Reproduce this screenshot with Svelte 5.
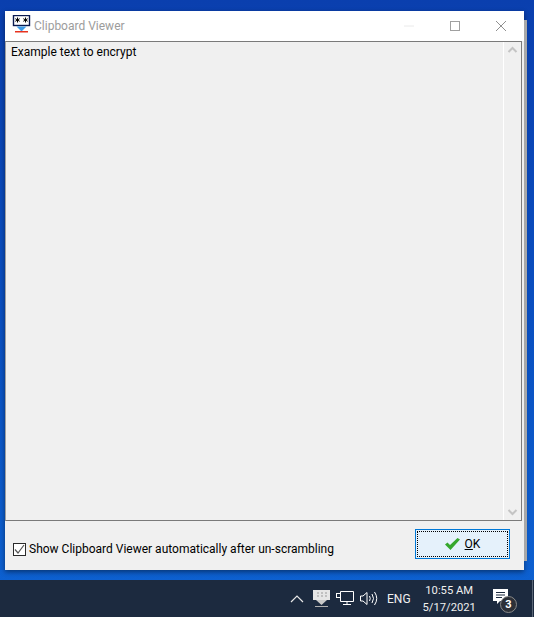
<script>
  let showAfter = true;
</script>

<div class="desktop">
  <div class="window">
    <div class="titlebar">
      <svg class="appicon" width="20" height="20" viewBox="0 0 20 20">
        <rect x="1.500" y="0.500" width="16" height="10" fill="#fff" stroke="#0a1a50" stroke-width="1.400"/>
        <path d="M5.500 2.500v5M3.300 3.700l4.400 2.600M7.700 3.700l-4.400 2.600M13.500 2.500v5M11.300 3.700l4.400 2.600M15.700 3.700l-4.400 2.600" stroke="#000" stroke-width="1"/>
        <path d="M4.500 11.500h10l-5 5z" fill="#3d9be8"/>
        <rect x="3" y="16" width="13" height="1.500" fill="#e8321e"/>
      </svg>
      <span class="title">Clipboard Viewer</span>
      <div class="controls">
        <svg class="ctl" width="46" height="30" viewBox="0 0 46 30"><path d="M18 15h10" stroke="#eaeaea"/></svg>
        <svg class="ctl" width="46" height="30" viewBox="0 0 46 30"><rect x="18.500" y="10.500" width="9" height="9" fill="none" stroke="#a0a0a0"/></svg>
        <svg class="ctl" width="46" height="30" viewBox="0 0 46 30"><path d="M18 10l10 10M28 10l-10 10" stroke="#909090"/></svg>
      </div>
    </div>

    <div class="textbox">
      <div class="text">Example text to encrypt</div>
      <div class="scrollbar">
        <svg width="17" height="17" viewBox="0 0 17 17"><path d="M4.500 10l4-4 4 4" fill="none" stroke="#c4c4c4" stroke-width="2"/></svg>
        <svg width="17" height="17" viewBox="0 0 17 17"><path d="M4.500 7l4 4 4-4" fill="none" stroke="#c4c4c4" stroke-width="2"/></svg>
      </div>
    </div>

    <div class="footer">
      <label class="check">
        <input type="checkbox" bind:checked={showAfter} />
        <span class="box">
          <svg width="11" height="11" viewBox="0 0 11 11"><path d="M1 5.500l3 3.500 6-8" fill="none" stroke="#555" stroke-width="1.200"/></svg>
        </span>
        Show Clipboard Viewer automatically after un-scrambling
      </label>
      <button class="ok">
        <svg width="15" height="12" viewBox="0 0 15 12"><path d="M0 6.500l2.500-2 2.500 2.500L12.500 0 15 1.500 5.500 12z" fill="#36a82e"/></svg>
        <span><u>O</u>K</span>
      </button>
    </div>
  </div>

  <div class="taskbar">
    <svg class="chev" width="14" height="9" viewBox="0 0 14 9"><path d="M1 8l6-6 6 6" fill="none" stroke="#e8e8e8" stroke-width="1.200"/></svg>
    <svg class="tray-app" width="17" height="18" viewBox="0 0 17 18">
      <rect x="0" y="0" width="17" height="10" fill="#e6e6e6"/>
      <path d="M4 3h2M8 3h2M12 3h2M4 6h2M8 6h2M12 6h2" stroke="#9a9a9a"/>
      <path d="M3 10h11l-5.500 5z" fill="#c8c8c8"/>
      <rect x="2" y="16" width="13" height="1" fill="#b0b0b0"/>
    </svg>
    <svg class="net" width="18" height="16" viewBox="0 0 18 16">
      <path d="M4.500 2.500V.5h13v10h-13V6.500M11 10.500v3M7 13.500h8" fill="none" stroke="#fff"/>
      <rect x=".5" y="2.500" width="4" height="4" fill="none" stroke="#fff"/>
    </svg>
    <svg class="vol" width="18" height="15" viewBox="0 0 18 15">
      <path d="M.5 5v5h2.500l4 3.500v-12L3 5z" fill="none" stroke="#fff"/>
      <path d="M9.500 5q1.500 2.500 0 5M12 3q3 4.500 0 9M14.500 1q4.500 6.500 0 13" fill="none" stroke="#fff"/>
    </svg>
    <span class="lang">ENG</span>
    <div class="clock">
      <div>10:55 AM</div>
      <div>5/17/2021</div>
    </div>
    <div class="notif">
      <svg width="15" height="15" viewBox="0 0 15 15">
        <path d="M0 0h15v12H7l-3 3v-3H0z" fill="#fff"/>
        <path d="M3 3.500h9M3 6h9M3 8.500h6" stroke="#1c2a3f"/>
      </svg>
      <span class="badge">3</span>
    </div>
    <div class="showdesk"></div>
  </div>
</div>

<style>
  :global(body) {
    margin: 0;
  }
  .desktop {
    width: 534px;
    height: 617px;
    display: flex;
    flex-direction: column;
    background: linear-gradient(180deg, #0a3fae 0%, #0a4fc0 50%, #0d62d2 100%);
    font-family: Roboto, "Open Sans", sans-serif;
    font-size: 12px;
    overflow: hidden;
  }
  .window {
    width: 519px;
    height: 559px;
    margin: 11px 0 0 5px;
    flex: none;
    display: flex;
    flex-direction: column;
    background: #f0f0f0;
    box-shadow: 12px 0 0 -9px #a8a8a8, 0 2px 5px rgba(0, 0, 0, 0.45);
  }
  .titlebar {
    height: 30px;
    flex: none;
    display: flex;
    align-items: center;
    background: #fff;
    padding-left: 7px;
  }
  .appicon {
    margin-top: -2px;
  }
  .title {
    margin-left: 2px;
    color: #9c9c9c;
    font-size: 12px;
  }
  .controls {
    margin-left: auto;
    display: flex;
  }
  .ctl {
    display: block;
  }
  .textbox {
    height: 480px;
    flex: none;
    margin-right: 2px;
    border: 1px solid #7a7a7a;
    border-left-color: #a0a0a0;
    display: flex;
    box-sizing: border-box;
  }
  .text {
    flex: 1;
    padding: 2px 5px;
    color: #000;
    line-height: 16px;
  }
  .scrollbar {
    width: 17px;
    border-left: 1px solid #fff;
    display: flex;
    flex-direction: column;
    justify-content: space-between;
  }
  .scrollbar svg {
    display: block;
  }
  .footer {
    flex: 1;
    display: flex;
    align-items: center;
    justify-content: space-between;
    padding: 0 14px 0 8px;
  }
  .check {
    display: flex;
    align-items: center;
    gap: 3px;
    color: #000;
    margin-top: 7px;
  }
  .check input {
    display: none;
  }
  .box {
    width: 11px;
    height: 11px;
    border: 1px solid #2a2a2a;
    background: #fff;
    display: flex;
    align-items: center;
    justify-content: center;
  }
  .ok {
    width: 95px;
    height: 30px;
    margin-bottom: 3px;
    box-sizing: border-box;
    border: 1px solid #0078d7;
    background: #e5f1fb;
    outline: 1px dotted #000;
    outline-offset: -3px;
    display: flex;
    align-items: center;
    justify-content: center;
    gap: 5px;
    padding: 0;
    font: inherit;
    color: #000;
  }
  .taskbar {
    margin-top: 10px;
    height: 37px;
    flex: none;
    background: #1c2a3f;
    display: flex;
    align-items: center;
    color: #f0f0f0;
    padding-left: 290px;
    box-sizing: border-box;
  }
  .chev {
    flex: none;
  }
  .tray-app {
    margin-left: 9px;
    flex: none;
  }
  .net {
    margin-left: 6px;
    flex: none;
  }
  .vol {
    margin-left: 6px;
    flex: none;
  }
  .lang {
    margin-left: 9px;
  }
  .clock {
    margin-left: 12px;
    text-align: center;
    line-height: 17px;
    font-size: 11.2px;
  }
  .notif {
    position: relative;
    margin-left: 17px;
    width: 15px;
    height: 15px;
    margin-top: -5px;
    flex: none;
  }
  .badge {
    position: absolute;
    left: 7px;
    top: 7px;
    width: 17px;
    height: 17px;
    border-radius: 50%;
    background: #2c3038;
    border: 1px solid #8a8a8a;
    box-sizing: border-box;
    font-size: 11px;
    font-weight: 700;
    line-height: 15px;
    text-align: center;
    color: #fff;
  }
  .showdesk {
    margin-left: 24px;
    width: 1px;
    height: 37px;
    background: #5a6676;
    flex: none;
  }
</style>
